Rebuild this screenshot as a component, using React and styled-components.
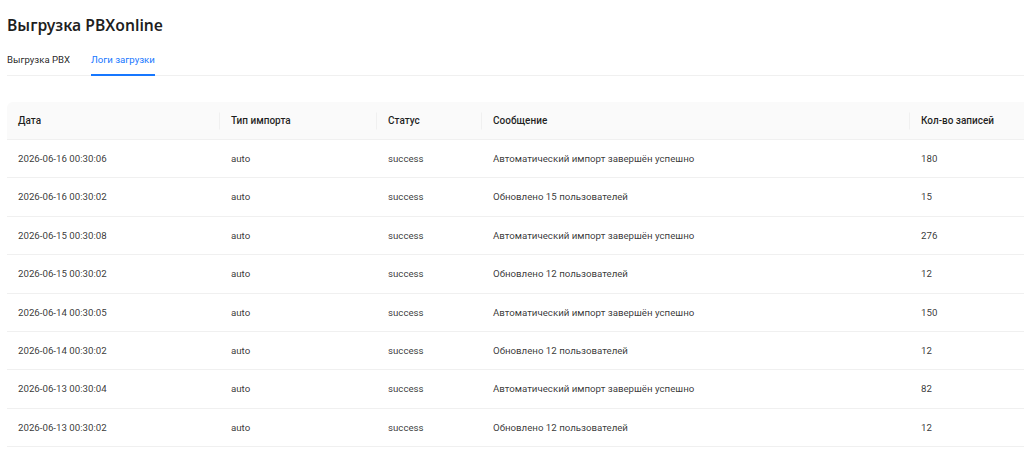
import React from "react";
import styled, { createGlobalStyle } from "styled-components";

const GlobalStyle = createGlobalStyle`
  body {
    margin: 0;
    background: #ffffff;
    font-family: Roboto, "Noto Sans", Arial, sans-serif;
    color: rgba(0, 0, 0, 0.88);
  }
`;

const Page = styled.div`
  padding: 12px 0 0 7px;
`;

const Title = styled.h1`
  margin: 0;
  font-family: "Noto Sans", Roboto, Arial, sans-serif;
  font-size: 15.7px;
  font-weight: 600;
  line-height: 26px;
  color: rgba(0, 0, 0, 0.88);
`;

const Tabs = styled.div`
  display: flex;
  gap: 21px;
  margin-top: 14px;
  border-bottom: 1px solid #f0f0f0;
`;

const Tab = styled.div`
  position: relative;
  font-size: 9.6px;
  line-height: 16px;
  padding: 0 0 7px;
  color: ${(p) => (p.$active ? "#1677ff" : "rgba(0, 0, 0, 0.88)")};

  &::after {
    content: "";
    display: ${(p) => (p.$active ? "block" : "none")};
    position: absolute;
    left: 0;
    right: 0;
    bottom: -1px;
    height: 2px;
    background: #1677ff;
  }
`;

const Table = styled.table`
  margin-top: 26px;
  width: 100%;
  border-collapse: separate;
  border-spacing: 0;
  table-layout: fixed;
  font-size: 9.7px;
`;

const Th = styled.th`
  position: relative;
  text-align: left;
  font-weight: 500;
  font-size: 10px;
  background: #fafafa;
  color: rgba(0, 0, 0, 0.88);
  padding: 10px 11px;
  line-height: 17px;
  border-bottom: 1px solid #f0f0f0;

  &:first-child {
    border-top-left-radius: 6px;
  }

  &:not(:last-child)::before {
    content: "";
    position: absolute;
    right: 0;
    top: 50%;
    width: 1px;
    height: 17px;
    transform: translateY(-50%);
    background: #f0f0f0;
  }
`;

const Td = styled.td`
  padding: 10px 11px;
  line-height: 17.4px;
  color: rgba(0, 0, 0, 0.8);
  border-bottom: 1px solid #f0f0f0;
  white-space: nowrap;
`;

const columns = [
  { title: "Дата", width: 213 },
  { title: "Тип импорта", width: 157 },
  { title: "Статус", width: 105 },
  { title: "Сообщение", width: 428 },
  { title: "Кол-во записей" },
];

const logs = [
  ["2026-06-16 00:30:06", "auto", "success", "Автоматический импорт завершён успешно", "180"],
  ["2026-06-16 00:30:02", "auto", "success", "Обновлено 15 пользователей", "15"],
  ["2026-06-15 00:30:08", "auto", "success", "Автоматический импорт завершён успешно", "276"],
  ["2026-06-15 00:30:02", "auto", "success", "Обновлено 12 пользователей", "12"],
  ["2026-06-14 00:30:05", "auto", "success", "Автоматический импорт завершён успешно", "150"],
  ["2026-06-14 00:30:02", "auto", "success", "Обновлено 12 пользователей", "12"],
  ["2026-06-13 00:30:04", "auto", "success", "Автоматический импорт завершён успешно", "82"],
  ["2026-06-13 00:30:02", "auto", "success", "Обновлено 12 пользователей", "12"],
];

export default function App() {
  return (
    <Page>
      <GlobalStyle />
      <Title>Выгрузка PBXonline</Title>
      <Tabs>
        <Tab>Выгрузка PBX</Tab>
        <Tab $active>Логи загрузки</Tab>
      </Tabs>
      <Table>
        <colgroup>
          {columns.map((c) => (
            <col key={c.title} style={c.width ? { width: c.width } : undefined} />
          ))}
        </colgroup>
        <thead>
          <tr>
            {columns.map((c) => (
              <Th key={c.title}>{c.title}</Th>
            ))}
          </tr>
        </thead>
        <tbody>
          {logs.map((row, i) => (
            <tr key={i}>
              {row.map((cell, j) => (
                <Td key={j}>{cell}</Td>
              ))}
            </tr>
          ))}
        </tbody>
      </Table>
    </Page>
  );
}
